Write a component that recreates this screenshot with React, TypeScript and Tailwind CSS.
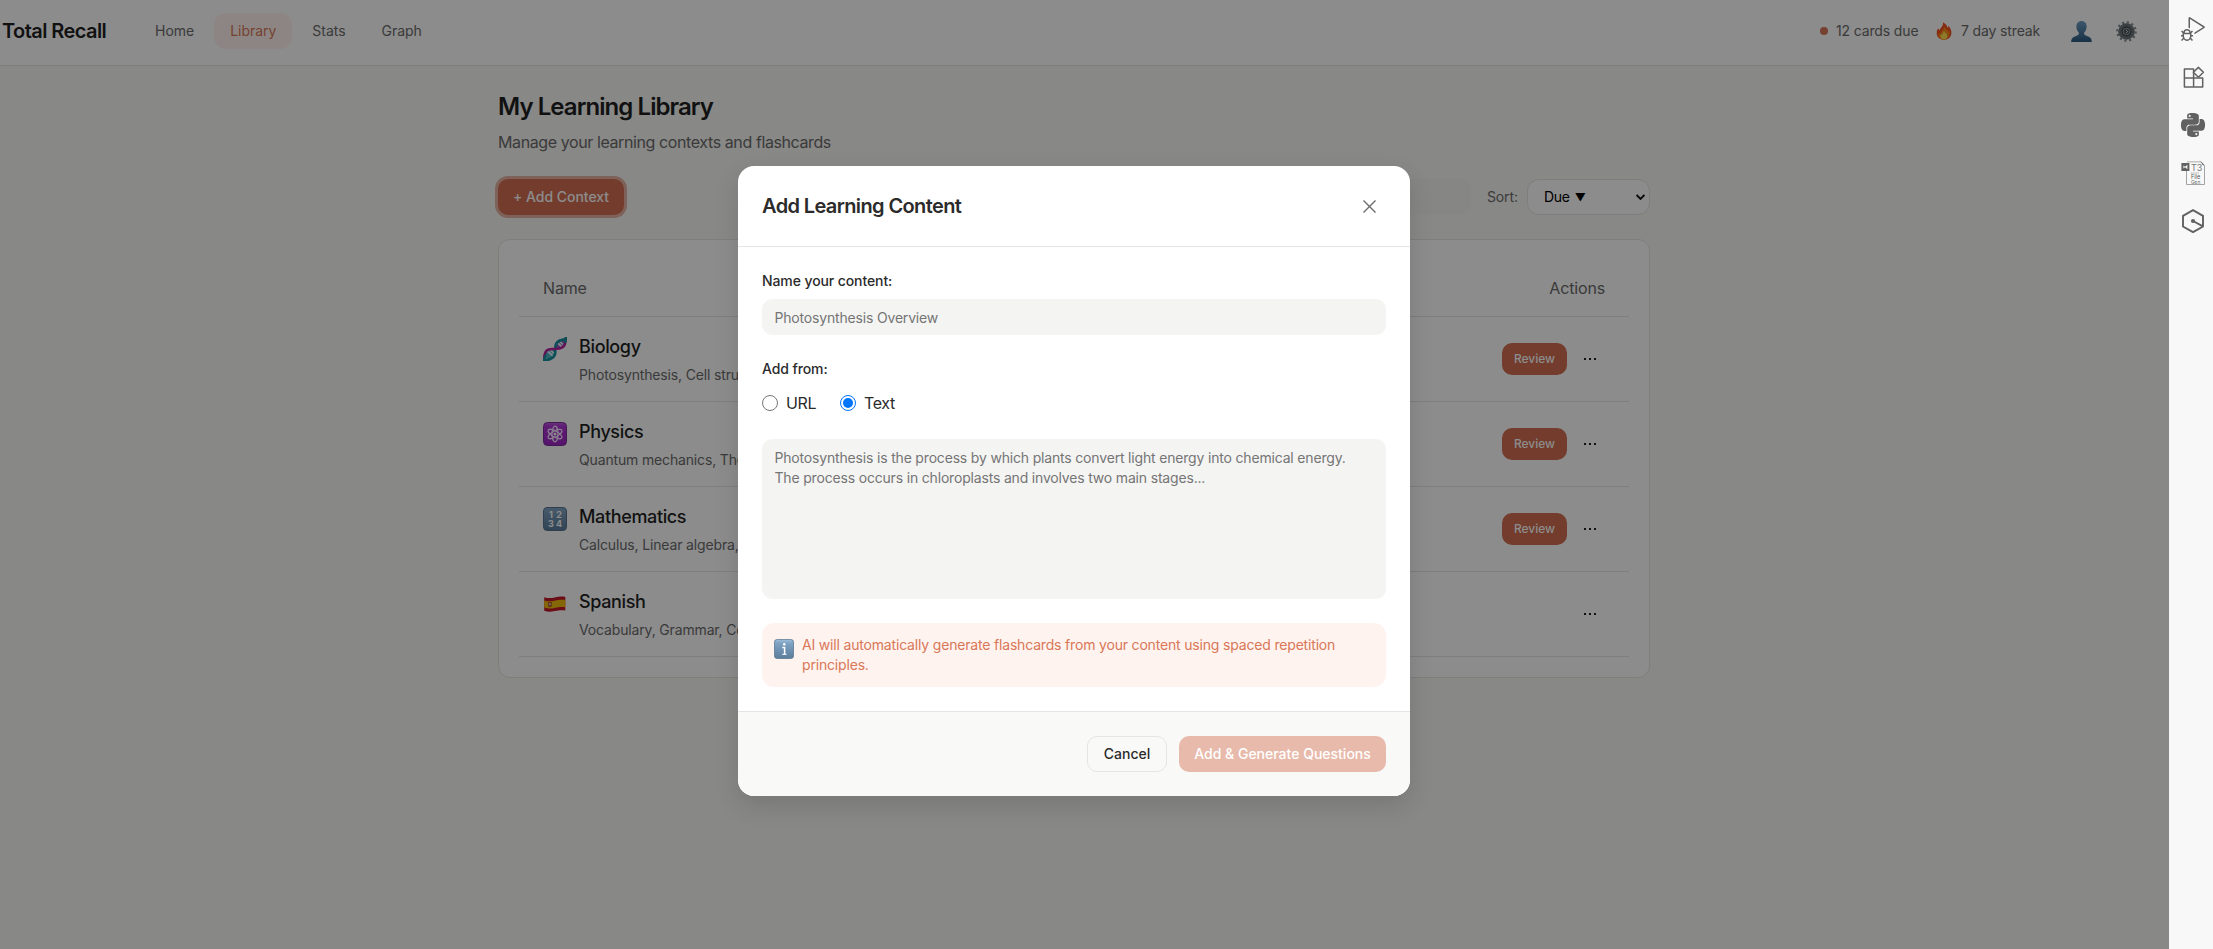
import React from "react";
import { VscDebugAlt } from "react-icons/vsc";
import { SiPython } from "react-icons/si";

function Flame() {
  return (
    <svg viewBox="0 0 16 18" className="h-[18px] w-4">
      <path d="M7 .3c2.500 1.400 4.300 3.400 4.600 5.600.6-.6.9-1.300.9-2.200 1.600 2 3 4.500 2.900 7.300C15.300 15 12 17.800 8 17.800S.7 15 .7 11.200c0-2 .6-3.600 1.500-5 .2 1 .7 1.700 1.400 2.100C4.200 6 7.700 3.800 7 .3z" fill="#f4511e" />
      <path d="M8.300 4.500c.3 2.400 3.400 3.300 3.900 5.200.5-.3.800-.8.900-1.400 1.600 4.500-.8 9-5.100 9.200-4.200 0-6.300-3-5.500-6.700.6.900 1.200 1.300 2 1.300C4.700 9.200 8.100 7.900 8.300 4.500z" fill="#fb8c1e" />
      <path d="M8.200 9c.1 1.900 3.100 2.500 3.100 5 0 2-1.400 3.500-3.300 3.500S4.500 16.200 4.500 14.300c0-1 .3-1.700.8-2.300.4.700.9.9 1.400.8C6.500 11.300 7.200 9.800 8.200 9z" fill="#ffe14d" />
    </svg>
  );
}

function Person() {
  return (
    <svg viewBox="0 0 21 21" className="size-[21px]">
      <defs>
        <linearGradient id="person" x1="0" y1="0" x2="0" y2="1">
          <stop offset="0" stopColor="#6f9fc6" />
          <stop offset="1" stopColor="#2c5a80" />
        </linearGradient>
      </defs>
      <path d="M10.500 0c3.200 0 5.100 2.300 5.100 5.500 0 2.500-.9 4.700-2.400 6-.3 1.800.3 2.500 2.300 3.300 3.200 1.200 5.200 2 5.300 6.200H.2c.1-4.200 2.100-5 5.300-6.200 2-.8 2.600-1.500 2.300-3.300-1.500-1.300-2.400-3.500-2.400-6C5.400 2.300 7.300 0 10.500 0z" fill="url(#person)" />
    </svg>
  );
}

function Gear() {
  return (
    <svg viewBox="-10.500 -10.500 21 21" className="size-[21px]">
      <circle r="9.200" fill="none" stroke="#858e93" strokeWidth="2.200" strokeDasharray="2.100 2.717" />
      <circle r="6.800" fill="none" stroke="#6c757b" strokeWidth="3" />
      <circle r="5.400" fill="#3f474c" />
      <circle r="3.300" fill="#4f595f" stroke="#929ca3" strokeWidth="1.100" />
      <path d="M-.6-1.500L1.300 0-.6 1.500" fill="none" stroke="#c3ccd1" strokeWidth="1" />
    </svg>
  );
}

function Dna() {
  return (
    <svg viewBox="0 0 24 24" className="size-6">
      <ellipse cx="7.300" cy="16.700" rx="5.800" ry="4.200" transform="rotate(-45 7.300 16.700)" fill="#4fb7c9" />
      <ellipse cx="16.900" cy="7.100" rx="5.800" ry="4.200" transform="rotate(-45 16.900 7.100)" fill="#8d5fc4" />
      <path d="M5 14.500l5 4.600M7.400 13l3.600 3.500M14.200 5.500l5 4.600M16.400 4l3.600 3.500" stroke="#effafc" strokeWidth="1.700" />
      <path d="M.9 23c4.500-.2 9.300-.5 11-5.200.9-3 .1-4.300.2-5.800.1-3.600 1.400-7.300 4.900-8.500 2.300-.8 4.700-.5 6.200-2.600" fill="none" stroke="#15909f" strokeWidth="2.600" strokeLinecap="round" />
      <path d="M1.200 20.500c.3-3.800.7-6.600 4-7.800 2.600-.9 4.400-.5 6.800-.8 3.500-.2 7.300.1 9.300-3.300 1-2 1.200-4.500 1.700-7.400" fill="none" stroke="#b8229f" strokeWidth="2.500" strokeLinecap="round" />
      <path d="M1.300 22.800c.1-1.700.4-3 1.100-4.200M16.500 3.700c2.500-1 4.500-.8 6.600-2.600l-.8 4" fill="none" stroke="#15909f" strokeWidth="2.300" strokeLinecap="round" />
    </svg>
  );
}

function Atom() {
  return (
    <svg viewBox="0 0 24 24" className="size-6">
      <defs>
        <linearGradient id="atom" x1="0" y1="0" x2="0" y2="1">
          <stop offset="0" stopColor="#c05be0" />
          <stop offset=".18" stopColor="#ad35d4" />
          <stop offset="1" stopColor="#9c24c4" />
        </linearGradient>
      </defs>
      <rect x=".5" y=".5" width="23" height="23" rx="4" fill="url(#atom)" stroke="#7b2b99" />
      <g fill="none" stroke="#f7e6ff" strokeWidth="1.200">
        <ellipse cx="12" cy="12" rx="3" ry="7.800" />
        <ellipse cx="12" cy="12" rx="3" ry="7.800" transform="rotate(60 12 12)" />
        <ellipse cx="12" cy="12" rx="3" ry="7.800" transform="rotate(120 12 12)" />
      </g>
      <circle cx="12" cy="12" r="1.500" fill="#fff" />
    </svg>
  );
}

function Numbers() {
  return (
    <span className="grid size-6 grid-cols-2 content-center justify-items-center rounded-[4px] border border-[#557590] bg-linear-to-b from-[#83a6c4] to-[#5b7d9c] px-[3px] text-[9px] leading-[9px] font-bold text-white">
      <span>1</span>
      <span>2</span>
      <span>3</span>
      <span>4</span>
    </span>
  );
}

function Flag() {
  return (
    <svg viewBox="0 0 24 24" className="size-6">
      <path d="M1.200 5.200c4 1.200 6.500 1 10.500.3s7-1.300 10.600-.6v13.600c-3.600-.7-6.600-.2-10.600.6s-6.500.9-10.500-.3z" fill="#c4182a" />
      <path d="M1.200 8.400c4 1.200 6.500 1 10.500.3s7-1.300 10.600-.6v7.200c-3.600-.7-6.600-.2-10.600.6s-6.500.9-10.500-.3z" fill="#f0bd0e" />
      <path d="M5 10h3.800v3.600c0 1-.8 1.500-1.900 1.500S5 14.600 5 13.600z" fill="#b5562a" />
      <path d="M6 11h1.800v2.300H6z" fill="#d9c2a0" />
    </svg>
  );
}

function InfoTile() {
  return (
    <svg viewBox="0 0 20 20" className="mt-1 size-5 shrink-0">
      <defs>
        <linearGradient id="info" x1="0" y1="0" x2="0" y2="1">
          <stop offset="0" stopColor="#9fc0dd" />
          <stop offset=".2" stopColor="#7ea2c3" />
          <stop offset="1" stopColor="#5b7d9c" />
        </linearGradient>
      </defs>
      <rect x=".4" y=".4" width="19.200" height="19.200" rx="3" fill="url(#info)" stroke="#54728d" strokeWidth=".8" />
      <circle cx="10.300" cy="5.300" r="1.300" fill="#fff" />
      <path d="M8.300 8.600h2.300v6.600" fill="none" stroke="#fff" strokeWidth="1.500" />
      <path d="M8.200 15.300h4.400" stroke="#fff" strokeWidth="1" />
    </svg>
  );
}

function Extensions() {
  return (
    <svg viewBox="0 0 24 24" className="size-6" fill="none" stroke="#616161" strokeWidth="1.500" strokeLinejoin="round">
      <path d="M3.400 3.900h9.200v18H3.400zM3.400 13.100h18.300v8.800H12.600V13.100" />
      <path d="M17.400 2.400l5 4.900-5 4.900-5-4.900z" />
    </svg>
  );
}

function FileTool() {
  return (
    <svg viewBox="0 0 24 24" className="size-6">
      <path d="M5.500 10v13.500h18V4.500L20 .7H6" fill="none" stroke="#a3a3a3" strokeWidth="1" />
      <path d="M6 .2h13l1 1.300H6z" fill="#cfcfcf" />
      <path d="M19.500 0l4 4.500-1.500-.3-1-1.200z" fill="#555" />
      <rect x=".4" y="2" width="8" height="8" fill="#616161" />
      <path d="M6.400 3.800v4.400L3.800 6zM2.400 4.500L4.400 6 2.400 7.500z" fill="#f8f8f8" />
      <text x="10" y="9.600" fontSize="9" fill="#777" fontFamily="Inter, sans-serif">T3</text>
      <path d="M10 12h8" stroke="#aaa" strokeWidth="1" strokeDasharray="1.500 .7" />
      <text x="10" y="18" fontSize="5.500" fill="#555" fontFamily="Inter, sans-serif">File</text>
      <text x="10" y="22.600" fontSize="4.800" fill="#666" fontFamily="Inter, sans-serif">Gen</text>
    </svg>
  );
}

function Hexagon() {
  return (
    <svg viewBox="0 0 24 24" className="size-6" fill="none" stroke="#616161" strokeWidth="1.900">
      <path d="M12 1.200l10 5.700v10.600L12 23.200 2 17.500V6.900z" />
      <path d="M12 12l9.500 5.200" />
      <circle cx="12" cy="12" r="2.100" fill="#616161" stroke="none" />
    </svg>
  );
}

const subjects = [
  { icon: <Dna />, name: "Biology", topics: "Photosynthesis, Cell structure", due: true },
  { icon: <Atom />, name: "Physics", topics: "Quantum mechanics, Thermodynamics", due: true },
  { icon: <Numbers />, name: "Mathematics", topics: "Calculus, Linear algebra, Statistics", due: true },
  { icon: <Flag />, name: "Spanish", topics: "Vocabulary, Grammar, Conversation", due: false },
];

function Header() {
  return (
    <header className="flex h-[66px] items-center border-b border-[#e5e5e3] bg-white pb-[3px] pl-[3px] text-sm text-[#6b6b6b]">
      <div className="-ml-px w-[137px] text-xl font-semibold tracking-[-0.029em] text-[#1f1f1f]">Total Recall</div>
      <nav className="flex gap-1 tracking-[-0.002em]">
        <a className="flex h-9 items-center px-4">Home</a>
        <a className="flex h-9 items-center rounded-xl bg-[#fff3ef] px-4 text-[#d97757]">Library</a>
        <a className="flex h-9 items-center px-4">Stats</a>
        <a className="flex h-9 items-center px-4">Graph</a>
      </nav>
      <div className="ml-auto flex items-center pr-8 tracking-[-0.01em]">
        <span className="mr-2 size-2 rounded-full bg-[#d97757]" />
        <span className="w-[100px]">12 cards due</span>
        <Flame />
        <span className="ml-[9px] w-[110px]">7 day streak</span>
        <Person />
        <span className="ml-6">
          <Gear />
        </span>
      </div>
    </header>
  );
}

function Library() {
  return (
    <main className="ml-[498px] w-[1152px] pt-[25px]">
      <h1 className="text-2xl leading-8 font-semibold tracking-[-0.039em] text-[#1f1f1f]">My Learning Library</h1>
      <p className="mt-[7px] text-base leading-6 tracking-[-0.025em] text-[#6b6b6b]">Manage your learning contexts and flashcards</p>
      <div className="mt-[25px] flex h-9 items-center">
        <button className="h-9 w-[126px] rounded-[10px] bg-[#d16d50] text-sm font-[450] tracking-[-0.002em] whitespace-nowrap text-white ring-3 ring-[#d16d50]/50">+ Add Context</button>
        <div className="ml-auto h-9 w-[320px] rounded-[10px] bg-[#f4f4f3]" />
        <span className="ml-4 w-10 text-sm tracking-[-0.01em] text-[#6b6b6b]">Sort:</span>
        <div className="flex h-9 w-[123px] items-center justify-between rounded-xl border border-[#e5e5e3] bg-white pr-1 pl-4 text-sm tracking-[-0.02em] text-black">
          <span className="flex items-center gap-[5px]">
            Due <span className="text-[11px] leading-none">▼</span>
          </span>
          <svg viewBox="0 0 9 7" className="h-[7px] w-[9px]" fill="none" stroke="#111" strokeWidth="1.900">
            <path d="M.6 1l3.900 4 3.900-4" />
          </svg>
        </div>
      </div>
      <section className="mt-6 rounded-xl border border-[#e5e5e3] bg-white p-5">
        <div className="flex h-[57px] items-center justify-between border-b border-[#e5e5e3] px-6 text-base tracking-[-0.01em] text-[#6b6b6b]">
          <span>Name</span>
          <span>Actions</span>
        </div>
        {subjects.map((s) => (
          <div key={s.name} className="flex h-[85px] items-center border-b border-[#e5e5e3] px-6">
            <div className="flex gap-3">
              <span className="mt-1">{s.icon}</span>
              <div>
                <div className="text-lg leading-[27px] font-[450] tracking-[-0.02em] text-[#1f1f1f]">{s.name}</div>
                <div className="mt-[5px] text-sm leading-5 tracking-[-0.011em] text-[#6b6b6b]">{s.topics}</div>
              </div>
            </div>
            <div className="ml-auto flex items-center">
              {s.due && <button className="h-8 w-[65px] rounded-[10px] bg-[#d16d50] text-xs font-[450] text-white">Review</button>}
              <button className="flex w-[38px] gap-[3px] pl-[17px]">
                <span className="size-[2px] bg-[#1f1f1f]" />
                <span className="size-[2px] bg-[#1f1f1f]" />
                <span className="size-[2px] bg-[#1f1f1f]" />
              </button>
            </div>
          </div>
        ))}
      </section>
    </main>
  );
}

function Radio({ label, checked }: { label: string; checked?: boolean }) {
  return (
    <label className="flex items-center gap-2">
      <span className={checked ? "flex size-4 items-center justify-center rounded-full border border-[#0075ff]" : "size-4 rounded-full border border-[#767676]"}>
        {checked && <span className="size-[10px] rounded-full bg-[#0075ff]" />}
      </span>
      <span>{label}</span>
    </label>
  );
}

function Dialog() {
  return (
    <div role="dialog" className="absolute top-[166px] left-[738px] w-[672px] overflow-hidden rounded-2xl bg-white text-[#2b2b2b] shadow-[0_10px_25px_rgba(0,0,0,0.12)]">
      <div className="flex h-[81px] items-center justify-between border-b border-[#e5e5e5] pr-[34px] pl-6">
        <h2 className="text-xl font-semibold tracking-[-0.031em]">Add Learning Content</h2>
        <svg viewBox="0 0 13 13" className="size-[13px]" stroke="#6b6b6b" strokeWidth="1.400">
          <path d="M.5.500l12 12M12.500.500l-12 12" />
        </svg>
      </div>
      <div className="p-6 text-sm">
        <div className="leading-5 font-[450] tracking-[-0.007em]">Name your content:</div>
        <input placeholder="Photosynthesis Overview" className="mt-2 block h-9 w-full rounded-[10px] bg-[#f4f4f3] px-[12.5px] tracking-[-0.0127em] placeholder:text-[#757575]" />
        <div className="mt-6 leading-5 font-[450] tracking-[-0.007em]">Add from:</div>
        <div className="mt-3 flex h-6 gap-6 text-base tracking-[-0.025em]">
          <Radio label="URL" />
          <Radio label="Text" checked />
        </div>
        <textarea
          placeholder={"Photosynthesis is the process by which plants convert light energy into chemical energy.\nThe process occurs in chloroplasts and involves two main stages..."}
          className="mt-6 block h-40 w-full resize-none rounded-[10px] bg-[#f4f4f3] px-[12.5px] pt-[9px] leading-5 tracking-[-0.0127em] placeholder:text-[#757575]"
        />
        <div className="mt-6 flex h-16 gap-2 rounded-xl bg-[#fff3ef] p-3 leading-5 tracking-[-0.0127em] text-[#d97757]">
          <InfoTile />
          <p>
            AI will automatically generate flashcards from your content using spaced repetition
            <br />
            principles.
          </p>
        </div>
      </div>
      <div className="flex h-[85px] items-center justify-end gap-3 border-t border-[#e5e5e5] bg-[#f9f9f7] pr-6 text-sm font-[450]">
        <button className="h-9 w-20 rounded-[10px] border border-[#e5e5e3]">Cancel</button>
        <button className="h-9 w-[207px] rounded-[10px] bg-[#e8baab] whitespace-nowrap text-white">Add &amp; Generate Questions</button>
      </div>
    </div>
  );
}

function ActivityBar() {
  return (
    <aside className="flex h-full w-11 shrink-0 flex-col gap-6 bg-[#f8f8f8] pt-[17px] pl-3 text-[#616161]">
      <VscDebugAlt className="size-6" />
      <Extensions />
      <SiPython className="size-6" />
      <FileTool />
      <Hexagon />
    </aside>
  );
}

export default function App() {
  return (
    <div className="flex h-[949px] w-[2213px] overflow-hidden font-['Inter',sans-serif]">
      <div className="relative h-full w-[2169px] bg-[#f8f8f5]">
        <Header />
        <Library />
        <div className="absolute inset-0 bg-black/45" />
        <Dialog />
      </div>
      <ActivityBar />
    </div>
  );
}
